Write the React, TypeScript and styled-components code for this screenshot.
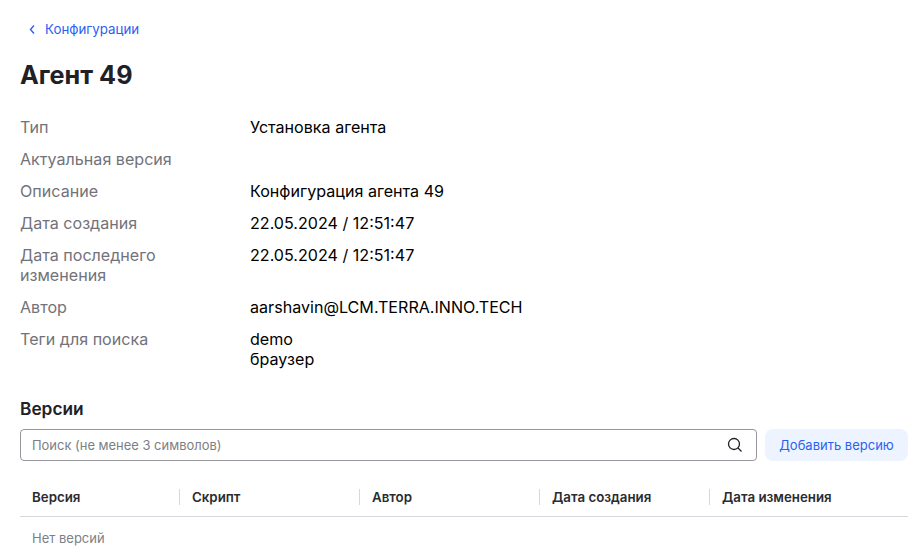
import React from "react";
import styled, { createGlobalStyle } from "styled-components";

const Global = createGlobalStyle`
  html, body { margin: 0; padding: 0; background: #fff; }
  body { font-family: Inter, "Noto Sans", sans-serif; color: #000; }
`;

const Page = styled.div`
  width: 924px;
  height: 557px;
  box-sizing: border-box;
  padding: 20px 16px 0 20px;
  overflow: hidden;
`;

const BackLink = styled.a`
  display: flex;
  align-items: center;
  gap: 5px;
  height: 18px;
  padding-left: 4px;
  font-size: 13.3px;
  line-height: 18px;
  color: #2a62f0;
  svg { display: block; }
`;

const Title = styled.h1`
  margin: 21px 0 0;
  font-size: 25.2px;
  line-height: 32px;
  font-weight: 700;
  color: #212125;
`;

const Details = styled.dl`
  margin: 26px 0 0;
  display: grid;
  grid-template-columns: 230px 1fr;
  row-gap: 12px;
  font-size: 16.1px;
  line-height: 20px;
`;

const Term = styled.dt`
  color: #72727a;
  max-width: 190px;
`;

const Value = styled.dd`
  margin: 0;
  color: #000;
`;

const SectionTitle = styled.h2`
  margin: 29px 0 0;
  font-size: 17.3px;
  line-height: 22px;
  font-weight: 600;
  color: #212125;
`;

const Toolbar = styled.div`
  display: flex;
  gap: 8px;
  margin-top: 9px;
`;

const Search = styled.div`
  flex: 1;
  height: 32px;
  box-sizing: border-box;
  display: flex;
  align-items: center;
  justify-content: space-between;
  padding: 0 13px 0 11px;
  border: 1px solid #96969c;
  border-radius: 4px;
  font-size: 12.95px;
  color: #7b7f86;
  svg { display: block; color: #212125; }
`;

const AddButton = styled.button`
  width: 143px;
  height: 32px;
  border: 0;
  border-radius: 8px;
  background: #edf4ff;
  color: #2a62f0;
  font: 400 13px Inter, sans-serif;
  padding: 0;
`;

const HeadRow = styled.div`
  display: grid;
  grid-template-columns: 160px 180px 180px 170px 1fr;
  align-items: start;
  height: 56px;
  box-sizing: border-box;
  padding-top: 28px;
  border-bottom: 1px solid #d6d6dc;
`;

const HeadCell = styled.div<{ $first?: boolean }>`
  height: 16px;
  line-height: 16px;
  padding-left: 12px;
  border-left: ${(p) => (p.$first ? "0" : "1px solid #d6d6dc")};
  margin-left: ${(p) => (p.$first ? 0 : -1)}px;
  font-size: 13.3px;
  font-weight: 600;
  color: #2b2b30;
`;

const Empty = styled.div`
  padding: 12px 12px 0;
  font-size: 13px;
  line-height: 18px;
  color: #7b7f86;
`;

const rows: [string, React.ReactNode][] = [
  ["Тип", "Установка агента"],
  ["Актуальная версия", ""],
  ["Описание", "Конфигурация агента 49"],
  ["Дата создания", "22.05.2024 / 12:51:47"],
  ["Дата последнего изменения", "22.05.2024 / 12:51:47"],
  ["Автор", "aarshavin@LCM.TERRA.INNO.TECH"],
  ["Теги для поиска", <>demo<br />браузер</>],
];

const columns = ["Версия", "Скрипт", "Автор", "Дата создания", "Дата изменения"];

export default function App() {
  return (
    <Page>
      <Global />
      <BackLink>
        <svg width="16" height="16" viewBox="0 0 16 16" fill="none">
          <path d="M10 4.5 6.5 8.5 10 12.5" stroke="currentColor" strokeWidth="1.4" />
        </svg>
        Конфигурации
      </BackLink>
      <Title>Агент 49</Title>
      <Details>
        {rows.map(([term, value]) => (
          <React.Fragment key={term}>
            <Term>{term}</Term>
            <Value>{value}</Value>
          </React.Fragment>
        ))}
      </Details>
      <SectionTitle>Версии</SectionTitle>
      <Toolbar>
        <Search>
          Поиск (не менее 3 символов)
          <svg width="16" height="16" viewBox="0 0 16 16" fill="none">
            <circle cx="7" cy="7" r="5.5" stroke="currentColor" strokeWidth="1.3" />
            <path d="m11 11 3.5 3.5" stroke="currentColor" strokeWidth="1.3" />
          </svg>
        </Search>
        <AddButton>Добавить версию</AddButton>
      </Toolbar>
      <HeadRow>
        {columns.map((c, i) => (
          <HeadCell key={c} $first={i === 0}>{c}</HeadCell>
        ))}
      </HeadRow>
      <Empty>Нет версий</Empty>
    </Page>
  );
}
